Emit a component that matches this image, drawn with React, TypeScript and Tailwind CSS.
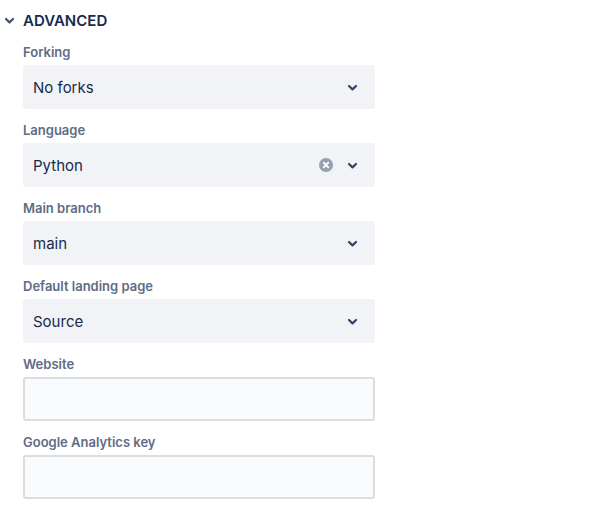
import { useState, type ReactNode } from "react";

function Chevron({ className }: { className: string }) {
  return (
    <svg viewBox="0 0 11 11" fill="none" stroke="currentColor" strokeWidth="2.2" strokeLinecap="round" strokeLinejoin="round" className={className} aria-hidden="true">
      <path d="M2 4 5.5 7.4 9 4" />
    </svg>
  );
}

function Field({ id, label, children }: { id: string; label: string; children: ReactNode }) {
  return (
    <div className="flex flex-col gap-1">
      <label htmlFor={id} className="text-[13px] leading-[18px] font-semibold text-[#5e6c84]">
        {label}
      </label>
      {children}
    </div>
  );
}

interface SelectFieldProps {
  id: string;
  label: string;
  options: string[];
  clearable?: boolean;
}

function SelectField({ id, label, options, clearable = false }: SelectFieldProps) {
  const [value, setValue] = useState(options[0]);
  return (
    <Field id={id} label={label}>
      <div className="relative">
        <select
          id={id}
          value={value}
          onChange={(e) => setValue(e.target.value)}
          className="block h-11 w-full appearance-none rounded-[3px] bg-[#f1f3f6] pt-0.5 pr-16 pl-[10px] text-[15px] text-[#172b4d] outline-none focus-visible:ring-2 focus-visible:ring-[#4c9aff]"
        >
          {clearable && <option value="" />}
          {options.map((option) => (
            <option key={option}>{option}</option>
          ))}
        </select>
        <div className="pointer-events-none absolute inset-y-0 right-[17px] flex items-center gap-[14px]">
          {clearable && value !== "" && (
            <button type="button" aria-label={"Clear " + label} onClick={() => setValue("")} className="pointer-events-auto">
              <svg viewBox="0 0 14 14" fill="none" className="size-[14px]" aria-hidden="true">
                <circle cx="7" cy="7" r="7" fill="#97a0af" />
                <path d="m4.7 4.7 4.6 4.6m0-4.6L4.7 9.3" stroke="#fff" strokeWidth="1.8" strokeLinecap="round" />
              </svg>
            </button>
          )}
          <Chevron className="size-[11px] text-[#344563]" />
        </div>
      </div>
    </Field>
  );
}

function TextField({ id, label }: { id: string; label: string }) {
  return (
    <Field id={id} label={label}>
      <input
        id={id}
        type="text"
        className="block h-11 w-full rounded-[3px] border-2 border-[#dadde3] bg-[#fafbfc] px-2 text-[15px] text-[#172b4d] outline-none focus:border-[#4c9aff]"
      />
    </Field>
  );
}

export default function App() {
  const [open, setOpen] = useState(true);
  return (
    <main className="min-h-screen bg-white pt-[10px] pr-4 pb-4 pl-1 font-['Inter','Liberation_Sans',sans-serif]">
      <h2>
        <button
          type="button"
          aria-expanded={open}
          onClick={() => setOpen(!open)}
          className="flex items-center gap-2 text-[15px] leading-[21px] font-semibold text-[#172b4d]"
        >
          <Chevron className="size-[11px] text-[#42526e]" />
          ADVANCED
        </button>
      </h2>
      {open && (
        <form className="mt-3 ml-[19px] flex max-w-[352px] flex-col gap-3">
          <SelectField id="forking" label="Forking" options={["No forks", "Allow only private forks", "Allow forks"]} />
          <SelectField id="language" label="Language" options={["Python", "JavaScript", "Java"]} clearable />
          <SelectField id="main-branch" label="Main branch" options={["main"]} />
          <SelectField id="landing-page" label="Default landing page" options={["Source", "Overview"]} />
          <TextField id="website" label="Website" />
          <TextField id="analytics-key" label="Google Analytics key" />
        </form>
      )}
    </main>
  );
}
